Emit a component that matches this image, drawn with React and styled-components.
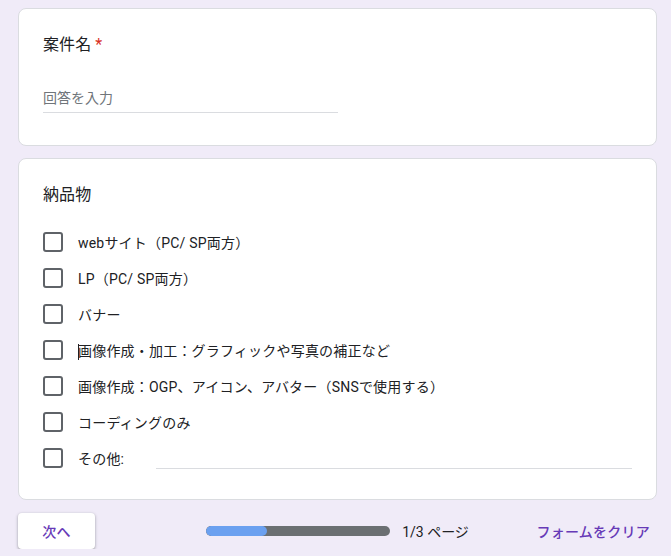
import React from "react";
import styled, { createGlobalStyle } from "styled-components";

const GlobalStyle = createGlobalStyle`
  body {
    margin: 0;
    background: #f0ebf8;
    font-family: Roboto, "Noto Sans CJK JP", sans-serif;
    color: #202124;
  }
`;

const Page = styled.div`
  padding: 8px 14px 0 18px;
  display: flex;
  flex-direction: column;
  gap: 12px;
`;

const Card = styled.div`
  background: #fff;
  border: 1px solid #dadce0;
  border-radius: 8px;
  padding: 24px 24px ${(p) => p.$bottom || 24}px;
`;

const Title = styled.div`
  font-size: 16px;
  line-height: 24px;
  letter-spacing: 0.1px;
  color: #202124;
`;

const Required = styled.span`
  color: #d93025;
  margin-left: 4px;
`;

const TextField = styled.div`
  width: 50%;
  margin-top: 24px;
  height: 32px;
  box-sizing: border-box;
  border-bottom: 1px solid #dadce0;
  display: flex;
  align-items: center;
  font-size: 14px;
  color: #70757a;
`;

const Options = styled.div`
  margin-top: 17px;
  display: flex;
  flex-direction: column;
`;

const Row = styled.label`
  display: flex;
  align-items: center;
  height: 36px;
  font-size: 14px;
  color: #202124;
  letter-spacing: 0.2px;
`;

const Box = styled.span`
  width: 20px;
  height: 20px;
  box-sizing: border-box;
  border: 2px solid #5f6368;
  border-radius: 3px;
  flex-shrink: 0;
  margin-right: 15px;
`;

const Caret = styled.span`
  display: inline-block;
  width: 1px;
  height: 16px;
  background: #202124;
  margin-right: -1px;
  vertical-align: middle;
`;

const OtherLine = styled.span`
  flex: 1;
  align-self: flex-end;
  margin-left: 32px;
  margin-bottom: 7px;
  border-bottom: 1px solid #dadce0;
  height: 20px;
`;

const Footer = styled.div`
  display: grid;
  grid-template-columns: 1fr auto 1fr;
  align-items: center;
  margin-top: 1px;
`;

const NextButton = styled.button`
  justify-self: start;
  width: 77px;
  height: 36px;
  background: #fff;
  border: none;
  border-radius: 4px;
  box-shadow: 0 1px 2px rgba(60, 64, 67, 0.3), 0 1px 3px 1px rgba(60, 64, 67, 0.15);
  color: #673ab7;
  font-family: inherit;
  font-size: 14px;
  font-weight: 500;
  letter-spacing: 0.25px;
`;

const Progress = styled.div`
  display: flex;
  align-items: center;
  gap: 12px;
  font-size: 14px;
  color: #202124;
`;

const Track = styled.div`
  width: 184px;
  height: 10px;
  border-radius: 5px;
  background: #6b6f72;
  overflow: hidden;
`;

const Fill = styled.div`
  height: 100%;
  border-radius: 5px;
  background: #6ba0f0;
`;

const ClearLink = styled.span`
  justify-self: end;
  padding-right: 7px;
  color: #673ab7;
  font-size: 14px;
  font-weight: 500;
  letter-spacing: 0.25px;
`;

const options = [
  "webサイト（PC/ SP両方）",
  "LP（PC/ SP両方）",
  "バナー",
  "画像作成・加工：グラフィックや写真の補正など",
  "画像作成：OGP、アイコン、アバター（SNSで使用する）",
  "コーディングのみ",
];

export default function App() {
  const page = 1;
  const total = 3;
  return (
    <>
      <GlobalStyle />
      <Page>
        <Card $bottom={32}>
          <Title>
            案件名<Required>*</Required>
          </Title>
          <TextField>回答を入力</TextField>
        </Card>
        <Card $bottom={23}>
          <Title>納品物</Title>
          <Options>
            {options.map((o, i) => (
              <Row key={o}>
                <Box />
                <span>
                  {i === 3 && <Caret />}
                  {o}
                </span>
              </Row>
            ))}
            <Row>
              <Box />
              <span>その他:</span>
              <OtherLine />
            </Row>
          </Options>
        </Card>
        <Footer>
          <NextButton>次へ</NextButton>
          <Progress>
            <Track>
              <Fill style={{ width: `${(page / total) * 100}%` }} />
            </Track>
            <span>
              {page}/{total} ページ
            </span>
          </Progress>
          <ClearLink>フォームをクリア</ClearLink>
        </Footer>
      </Page>
    </>
  );
}
